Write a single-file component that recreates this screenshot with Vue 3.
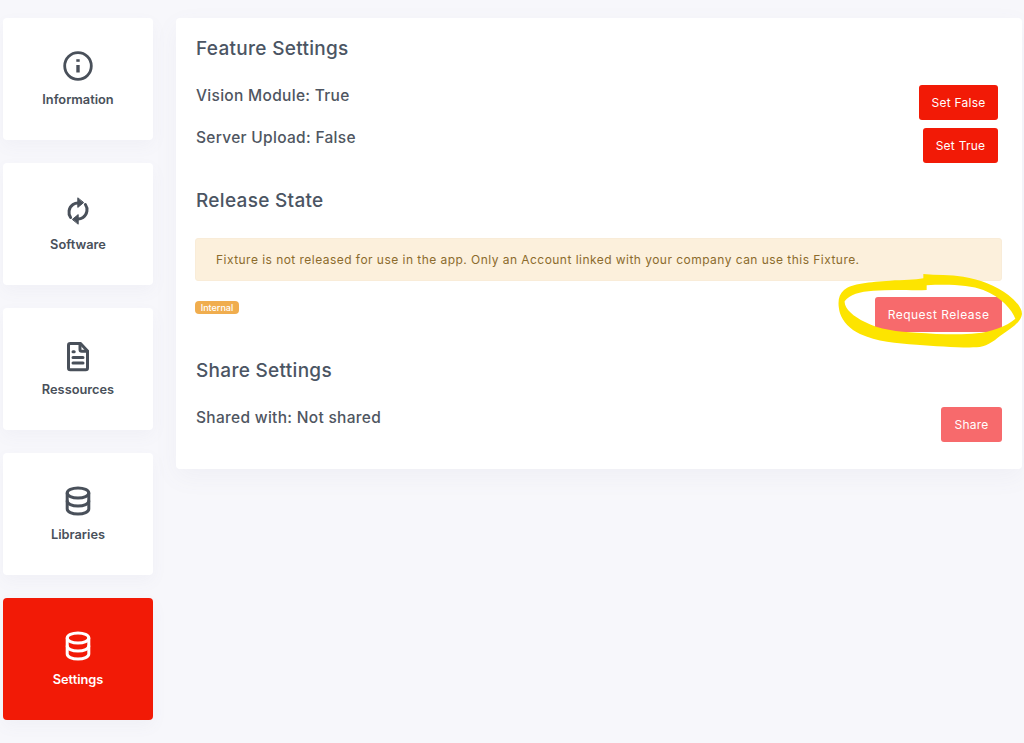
<script setup>
const navItems = [
  { label: 'Information', icon: 'info' },
  { label: 'Software', icon: 'sync' },
  { label: 'Ressources', icon: 'file' },
  { label: 'Libraries', icon: 'db' },
  { label: 'Settings', icon: 'db', active: true },
]
</script>

<template>
  <div class="page">
    <nav class="side">
      <a v-for="n in navItems" :key="n.label" class="tile" :class="{ active: n.active }">
        <svg class="ico" viewBox="0 0 32 32" fill="none" stroke="currentColor" stroke-width="3" stroke-linecap="round" stroke-linejoin="round">
          <template v-if="n.icon === 'info'">
            <circle cx="16" cy="16" r="13.3" stroke-width="2.8" />
            <path d="M16 15v7.5" stroke-width="3.4" stroke-linecap="butt" />
            <path d="M16 9.2v2.6" stroke-width="3.4" stroke-linecap="butt" />
          </template>
          <template v-else-if="n.icon === 'sync'">
            <path d="M8.6 22.5C5.8 18.5 6.6 12.6 11 9.6c1.8-1.2 3.6-1.6 5.4-1.5" />
            <path d="M23.4 9.5c2.8 4 2 9.9-2.4 12.9-1.8 1.2-3.6 1.6-5.4 1.5" />
            <path d="M15.8 3.2v9.2l5.6-4.6z" fill="currentColor" stroke-width="1" />
            <path d="M16.2 28.8v-9.2l-5.6 4.6z" fill="currentColor" stroke-width="1" />
          </template>
          <template v-else-if="n.icon === 'file'">
            <path d="M6.5 5.2c0-1 .8-1.8 1.8-1.8h10.2l7 7.6v17c0 1-.8 1.8-1.8 1.8H8.3c-1 0-1.8-.8-1.8-1.8z" />
            <path d="M18 3.6v5.8c0 1 .8 1.8 1.8 1.8h5.6" />
            <path d="M11 17.5h10M11 23h10" />
            <path d="M11 11.8h1.2" />
          </template>
          <template v-else>
            <ellipse cx="16" cy="8" rx="10.8" ry="5" />
            <path d="M5.2 8v16c0 2.8 4.8 5 10.8 5s10.8-2.2 10.8-5V8" />
            <path d="M5.2 16c0 2.8 4.8 5 10.8 5s10.8-2.2 10.8-5" />
          </template>
        </svg>
        <span class="tile-label">{{ n.label }}</span>
      </a>
    </nav>

    <main class="panel">
      <h2 class="h first">Feature Settings</h2>
      <div class="feat feat-a">
        <span class="k">Vision Module: True</span>
        <button class="btn solid w-false">Set False</button>
      </div>
      <div class="feat feat-b">
        <span class="k">Server Upload: False</span>
        <button class="btn solid w-true">Set True</button>
      </div>

      <h2 class="h release">Release State</h2>
      <div class="alert">Fixture is not released for use in the app. Only an Account linked with your company can use this Fixture.</div>
      <div class="state">
        <span class="badge">Internal</span>
        <div class="mark-wrap">
          <button class="btn soft w-req">Request Release</button>
          <svg class="scribble" viewBox="0 0 612 300">
            <path fill="#fde400" fill-rule="evenodd" d="M310 42 C350 46 390 44 430 50 C480 58 530 78 565 105 C590 125 606 145 606 162 C604 185 575 205 540 228 C520 245 495 262 470 262 C420 264 350 258 290 254 C230 250 170 245 120 222 C90 208 68 185 60 160 C52 130 54 105 72 90 C95 70 150 66 210 62 C250 60 285 60 310 55 Z M320 76 L320 90 C280 92 220 88 160 92 C120 94 88 104 74 124 C72 145 100 170 135 186 C175 208 235 216 290 218 C350 222 420 226 470 220 C510 216 560 200 586 176 C576 150 545 112 490 90 C450 76 390 72 320 76 Z" />
          </svg>
        </div>
      </div>

      <h2 class="h share">Share Settings</h2>
      <div class="share-row">
        <span class="k">Shared with: Not shared</span>
        <button class="btn soft w-share">Share</button>
      </div>
    </main>
  </div>
</template>

<style>
html, body { margin: 0; background: #f7f7fb; }
</style>

<style scoped>
.page {
  display: flex;
  align-items: flex-start;
  gap: 23px;
  width: 1024px;
  height: 743px;
  box-sizing: border-box;
  padding: 18px 2px 0 3px;
  overflow: hidden;
  background: #f7f7fb;
  font-family: "Inter", "Noto Sans", sans-serif;
  color: #4b5563;
}
.side { display: flex; flex-direction: column; gap: 23px; width: 150px; flex: none; }
.tile {
  height: 122px;
  box-sizing: border-box;
  padding-top: 32px;
  background: #fff;
  border-radius: 4px;
  box-shadow: 0 6px 16px rgba(120, 125, 160, .05);
  display: flex;
  flex-direction: column;
  align-items: center;
  color: #49505a;
}
.tile.active { background: #f21a06; color: #fff; }
.ico { width: 32px; height: 32px; display: block; }
.tile-label { margin-top: 10px; font-size: 12.8px; line-height: 16px; font-weight: 600; }
.panel {
  flex: 1;
  height: 451px;
  box-sizing: border-box;
  padding: 20px 20px 0 19px;
  background: #fff;
  border-radius: 4px;
  box-shadow: 0 8px 24px rgba(120, 125, 160, .06);
}
.h { margin: 0; padding-left: 1px; font-size: 19px; line-height: 22px; font-weight: 500; color: #4b5563; letter-spacing: .3px; }
.k { padding-left: 1px; font-size: 15.5px; line-height: 20px; font-weight: 500; color: #4f5661; letter-spacing: .3px; }
.feat { display: flex; justify-content: space-between; align-items: flex-start; padding-right: 4px; }
.feat-a { margin-top: 25px; }
.feat-a .k { padding-top: 1px; }
.feat-b { margin-top: 8px; }
.btn {
  border: 0;
  border-radius: 3px;
  color: #fff;
  font: 400 12px/16px "Inter", "Noto Sans", sans-serif;
  letter-spacing: .25px;
  padding: 0;
  height: 35px;
}
.solid { background: #f21a06; }
.soft { background: #f76a6c; }
.w-false { width: 79px; }
.w-true { width: 75px; }
.w-req { width: 127px; display: block; letter-spacing: .5px; }
.w-share { width: 61px; }
.release { margin-top: 27px; }
.alert {
  margin-top: 26px;
  height: 43px;
  box-sizing: border-box;
  padding: 0 20px;
  display: flex;
  align-items: center;
  background: #fcf0dc;
  border: 1px solid #f9ecd8;
  border-radius: 3px;
  color: #8b6b2c;
  font-size: 12px;
  letter-spacing: .46px;
  white-space: nowrap;
}
.state { display: flex; justify-content: space-between; align-items: flex-start; margin-top: 16px; }
.badge {
  margin-top: 4px;
  height: 13px;
  width: 44px;
  text-align: center;
  border-radius: 4px;
  background: #f0ad4e;
  color: #fff;
  font-size: 9px;
  line-height: 13px;
  font-weight: 500;
}
.mark-wrap { position: relative; }
.scribble { position: absolute; left: -55px; top: -37px; width: 204px; height: 100px; pointer-events: none; overflow: visible; }
.share { margin-top: 28px; }
.share-row { display: flex; justify-content: space-between; align-items: flex-start; margin-top: 25px; }
.share-row .k { padding-top: 1px; }
</style>
